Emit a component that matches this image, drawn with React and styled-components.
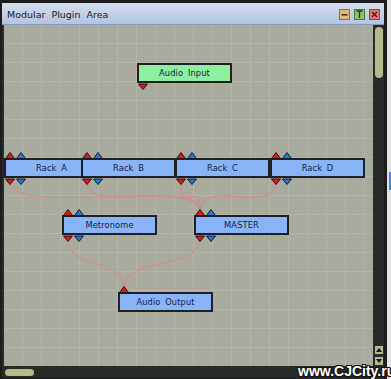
import React from "react";
import styled, { createGlobalStyle } from "styled-components";

const GlobalStyle = createGlobalStyle`
	html, body {
		margin: 0;
		padding: 0;
		background: #e6e6e6;
		overflow: hidden;
	}
`;

const Screen = styled.div`
	position: relative;
	display: flex;
	width: 391px;
	height: 379px;
	font-family: "DejaVu Sans", "Liberation Sans", sans-serif;
`;

const Window = styled.div`
	display: flex;
	flex-direction: column;
	width: 387px;
	height: 379px;
	box-sizing: border-box;
	border-top: 3px solid #1b1c1b;
	border-left: 2px solid #1b1c1b;
	border-right: 3px solid #1b1c1b;
	border-bottom: 1px solid #1b1c1b;
	background: #2a2e2a;
`;

const TitleBar = styled.div`
	display: flex;
	align-items: center;
	height: 21px;
	padding: 0 4px 0 5px;
	background: linear-gradient(#d4deee, #b2c4df);
	border-bottom: 1px solid #8298bd;
`;

const Title = styled.div`
	flex: 1;
	padding-top: 2px;
	font-size: 9.5px;
	word-spacing: 3px;
	color: #1a1a1a;
`;

const TitleButtons = styled.div`
	display: flex;
	gap: 4px;
	padding-top: 1px;
`;

const TitleButton = styled.div`
	display: flex;
	align-items: center;
	justify-content: center;
	width: 11px;
	height: 11px;
	box-sizing: border-box;
	border: 1px solid ${(p) => p.$edge};
	background: ${(p) => p.$fill};
`;

const Body = styled.div`
	display: flex;
	gap: 1px;
	height: 341px;
	padding-left: 2px;
`;

const Canvas = styled.div`
	position: relative;
	width: 369px;
	height: 341px;
	overflow: hidden;
	background-color: #a8ab9d;
	background-image: linear-gradient(90deg, transparent 18px, #b4b6a9 18px),
		linear-gradient(180deg, transparent 18px, #b4b6a9 18px);
	background-size: 19px 19px;
`;

const Wires = styled.svg`
	position: absolute;
	left: 0;
	top: 0;
	pointer-events: none;
`;

const NodeWrap = styled.div`
	position: absolute;
	left: ${(p) => p.$x}px;
	top: ${(p) => p.$y - 6}px;
	width: 95px;
	display: flex;
	flex-direction: column;
`;

const PortRow = styled.div`
	display: flex;
	gap: 1px;
	height: 6px;
	padding-left: 1px;
	position: relative;
	z-index: 1;
`;

const NodeBox = styled.div`
	display: flex;
	align-items: center;
	justify-content: center;
	height: 20px;
	box-sizing: border-box;
	border: 2px solid #1f2026;
	background: ${(p) => (p.$kind === "input" ? "#8cf0a0" : "#8ab4f8")};
	font-size: 8.3px;
	letter-spacing: 0.1px;
	word-spacing: 2px;
	color: #16213a;
	white-space: nowrap;
`;

const VScroll = styled.div`
	display: flex;
	flex-direction: column;
	align-items: center;
	width: 10px;
	padding: 2px 0 1px;
	box-sizing: border-box;
	background: #272b27;
`;

const VThumb = styled.div`
	width: 8px;
	height: 51px;
	border-radius: 4px;
	background: #b6ba8b;
`;

const Arrows = styled.div`
	margin-top: auto;
	display: flex;
	flex-direction: column;
	gap: 3px;
`;

const ArrowBtn = styled.div`
	display: flex;
	align-items: center;
	justify-content: center;
	width: 8px;
	height: 8px;
	background: #b6ba8b;
`;

const HScroll = styled.div`
	height: 12px;
	padding: 3px 0 0 3px;
	box-sizing: border-box;
	background: #272b27;
`;

const HThumb = styled.div`
	width: 29px;
	height: 7px;
	border-radius: 4px;
	background: #b6ba8b;
`;

const SideStrip = styled.div`
	flex: 1;
	display: flex;
	flex-direction: column;
	background: #e4e4e4;
	padding-top: 172px;
`;

const SideTab = styled.div`
	margin-left: 2px;
	height: 18px;
	background: #4f7fd8;
`;

const Watermark = styled.div`
	position: absolute;
	left: 298px;
	top: 363px;
	font-family: "Liberation Sans", Arial, sans-serif;
	font-weight: bold;
	font-size: 14px;
	color: #ffffff;
	white-space: nowrap;
	text-shadow: 1px 0 0 #111, -1px 0 0 #111, 0 1px 0 #111, 0 -1px 0 #111,
		1px 1px 0 #111, -1px -1px 0 #111, 1px -1px 0 #111, -1px 1px 0 #111;
`;

const PORT_COLORS = { red: "#ee1111", blue: "#1a7ae8" };

const Port = ({ color, down }) => (
	<svg width="10" height="7" style={{ display: "block", overflow: "visible" }}>
		<polygon
			points={down ? "0.5,0 5,5.5 9.5,0" : "0.5,6.5 5,0.5 9.5,6.5"}
			fill={PORT_COLORS[color]}
			stroke="#1a1a1a"
			strokeWidth="1"
		/>
	</svg>
);

const Node = ({ node }) => (
	<NodeWrap $x={node.x} $y={node.y}>
		<PortRow>
			{node.inputs.map((c) => (
				<Port key={c} color={c} />
			))}
		</PortRow>
		<NodeBox $kind={node.kind}>{node.label}</NodeBox>
		<PortRow style={{ marginTop: 1 }}>
			{node.outputs.map((c) => (
				<Port key={c} color={c} down />
			))}
		</PortRow>
	</NodeWrap>
);

const BOTH = ["red", "blue"];

const nodes = [
	{ label: "Audio Input", kind: "input", x: 133, y: 38, inputs: [], outputs: ["red"] },
	{ label: "Rack A", x: 0, y: 133, inputs: BOTH, outputs: BOTH },
	{ label: "Rack B", x: 77, y: 133, inputs: BOTH, outputs: BOTH },
	{ label: "Rack C", x: 171, y: 133, inputs: BOTH, outputs: BOTH },
	{ label: "Rack D", x: 266, y: 133, inputs: BOTH, outputs: BOTH },
	{ label: "Metronome", x: 58, y: 190, inputs: BOTH, outputs: BOTH },
	{ label: "MASTER", x: 190, y: 190, inputs: BOTH, outputs: BOTH },
	{ label: "Audio Output", x: 114, y: 267, inputs: ["red"], outputs: [] },
];

const curve = ([x1, y1], [x2, y2], k) =>
	`M${x1},${y1} C${x1},${y1 + k} ${x2},${y2 - k} ${x2},${y2}`;

const wires = [
	curve([6, 156], [196, 187], 38),
	curve([83, 156], [196, 187], 36),
	curve([177, 156], [196, 187], 34),
	curve([272, 156], [196, 187], 36),
	curve([64, 213], [120, 264], 34),
	curve([196, 213], [120, 264], 34),
];

export default function App() {
	return (
		<Screen>
			<GlobalStyle />
			<Window>
				<TitleBar>
					<Title>Modular Plugin Area</Title>
					<TitleButtons>
						<TitleButton $fill="#dcbb78" $edge="#8f7036">
							<svg width="7" height="7">
								<rect x="0.5" y="3" width="6" height="1.5" fill="#3b2c10" />
							</svg>
						</TitleButton>
						<TitleButton $fill="#8cc46a" $edge="#4a7c30">
							<svg width="7" height="8">
								<path d="M0.5 1H6.5M3.5 1V8" stroke="#1f3a12" strokeWidth="1.3" fill="none" />
							</svg>
						</TitleButton>
						<TitleButton $fill="#d97a76" $edge="#93423e">
							<svg width="7" height="7">
								<path d="M1 1L6 6M6 1L1 6" stroke="#5a1512" strokeWidth="1.4" fill="none" />
							</svg>
						</TitleButton>
					</TitleButtons>
				</TitleBar>
				<Body>
					<Canvas>
						<Wires width="369" height="341">
							{wires.map((d, i) => (
								<path key={i} d={d} fill="none" stroke="#d48c88" strokeOpacity="0.85" strokeWidth="1.3" />
							))}
						</Wires>
						{nodes.map((n) => (
							<Node key={n.label} node={n} />
						))}
					</Canvas>
					<VScroll>
						<VThumb />
						<Arrows>
							<ArrowBtn>
								<svg width="6" height="4">
									<polygon points="0,4 3,0 6,4" fill="#111" />
								</svg>
							</ArrowBtn>
							<ArrowBtn>
								<svg width="6" height="4">
									<polygon points="0,0 3,4 6,0" fill="#111" />
								</svg>
							</ArrowBtn>
						</Arrows>
					</VScroll>
				</Body>
				<HScroll>
					<HThumb />
				</HScroll>
			</Window>
			<SideStrip>
				<SideTab />
			</SideStrip>
			<Watermark>www.CJCity.ru</Watermark>
		</Screen>
	);
}
